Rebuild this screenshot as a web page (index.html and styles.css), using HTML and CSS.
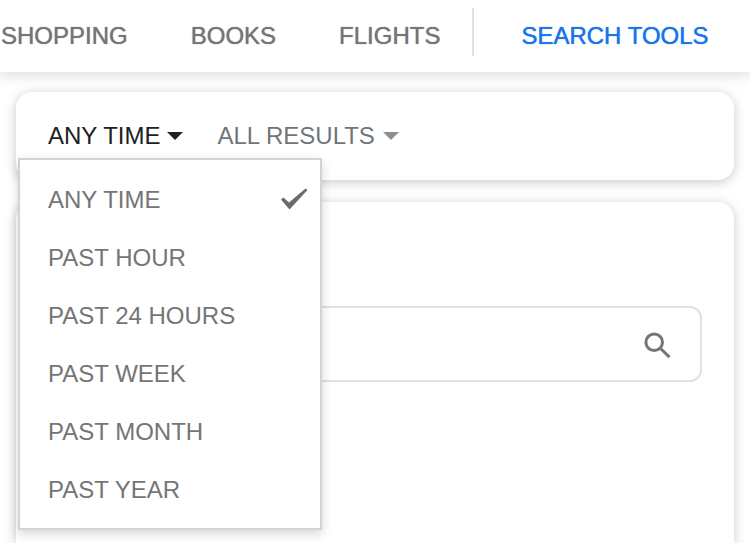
FILE: index.html
```
<!DOCTYPE html>
<html lang="en">
<head>
<meta charset="UTF-8">
<meta name="viewport" content="width=device-width, initial-scale=1.0">
<title>Search Tools</title>
<link rel="stylesheet" href="styles.css">
</head>
<body>

    <header class="header">
        <nav class="tabs">
            <a href="#shopping">SHOPPING</a>
            <a href="#books">BOOKS</a>
            <a href="#flights">FLIGHTS</a>
        </nav>
        <a href="#tools" class="tools-link">SEARCH TOOLS</a>
    </header>

    <main class="content">
        <div class="card filters">
            <div class="dropdown">
                <button type="button" class="filter active" aria-haspopup="menu" aria-expanded="true" aria-controls="timeMenu">
                    ANY TIME
                    <svg class="caret" viewBox="0 0 16 8" aria-hidden="true"><path d="M0 0h16L8 8z"/></svg>
                </button>
                <div class="menu" id="timeMenu" role="menu">
                    <button type="button" role="menuitemradio" aria-checked="true">
                        ANY TIME
                        <svg class="check" viewBox="0 0 28 24" aria-hidden="true"><path d="M1 11.500L3.500 9.500L9 14.500L25.500 0.500L27.500 2L9.500 21.500z"/></svg>
                    </button>
                    <button type="button" role="menuitemradio" aria-checked="false">PAST HOUR</button>
                    <button type="button" role="menuitemradio" aria-checked="false">PAST 24 HOURS</button>
                    <button type="button" role="menuitemradio" aria-checked="false">PAST WEEK</button>
                    <button type="button" role="menuitemradio" aria-checked="false">PAST MONTH</button>
                    <button type="button" role="menuitemradio" aria-checked="false">PAST YEAR</button>
                </div>
            </div>
            <label class="filter">
                <select class="filter-select" aria-label="Result type">
                    <option>ALL RESULTS</option>
                </select>
                <svg class="caret" viewBox="0 0 16 8" aria-hidden="true"><path d="M0 0h16L8 8z"/></svg>
            </label>
        </div>

        <div class="card results">
            <form class="search-box">
                <input type="text" aria-label="Search">
                <button type="submit" aria-label="Submit search">
                    <svg class="search-icon" viewBox="0 0 28 28" aria-hidden="true">
                        <circle cx="10.200" cy="12.300" r="8.300"/>
                        <path d="M16 18l9.500 9.200"/>
                    </svg>
                </button>
            </form>
        </div>
    </main>

</body>
</html>
```

FILE: styles.css
```
/* Basic styling */
* {
    box-sizing: border-box;
}
body {
    display: flex;
    flex-direction: column;
    height: 100vh;
    margin: 0;
    overflow: hidden;
    font-family: "Liberation Sans", Arial, sans-serif;
    font-size: 24px;
    line-height: 28px;
    color: #757575;
    background-color: #fff;
}
button, input, select {
    margin: 0;
    padding: 0;
    border: none;
    background: none;
    font: inherit;
    color: inherit;
}
button, select {
    cursor: pointer;
}
a {
    color: inherit;
    text-decoration: none;
}

/* Header */
.header {
    display: flex;
    align-items: center;
    flex-shrink: 0;
    padding: 8px 0 16px;
    white-space: nowrap;
    background-color: #fff;
    box-shadow: 0 4px 12px rgba(50, 55, 90, 0.16);
    text-shadow: 0 0 1px currentColor;
}
.tabs {
    display: flex;
    align-items: center;
    gap: 63px;
    height: 48px;
    padding: 8px 32px 0 1px;
    border-right: 2px solid #e0e0e0;
}
.tools-link {
    padding: 8px 0 0 47px;
    color: #1a73e8;
}

/* Cards */
.content {
    display: flex;
    flex: 1;
    flex-direction: column;
    gap: 22px;
    padding: 20px 16px 0;
}
.card {
    border-radius: 16px;
    background-color: #fff;
    box-shadow: 0 2px 12px rgba(0, 0, 0, 0.22);
}
.filters {
    position: relative;
    z-index: 1;
    display: flex;
    align-items: center;
    gap: 34px;
    height: 88px;
    padding: 0 32px;
}
.results {
    flex: 1;
    padding: 104px 32px 32px;
    border-radius: 16px 16px 0 0;
}

/* Filters */
.dropdown {
    position: relative;
}
.filter {
    display: flex;
    align-items: center;
    gap: 7px;
    color: #70757a;
}
.filter.active {
    color: #202124;
}
.filter-select {
    appearance: none;
}
.caret {
    width: 16px;
    height: 8px;
    fill: #8f8f8f;
}
.active .caret {
    fill: #202124;
}

.menu {
    position: absolute;
    top: 36px;
    left: -30px;
    width: 304px;
    padding: 11px 0 9px;
    border: 2px solid #d3d3d3;
    background-color: #fff;
    box-shadow: 0 4px 10px rgba(0, 0, 0, 0.16);
}
.menu button {
    display: flex;
    align-items: center;
    justify-content: space-between;
    width: 100%;
    height: 58px;
    padding: 0 12px 0 28px;
}
.check {
    width: 28px;
    height: 24px;
    fill: #6b6b6b;
}

/* Search */
.search-box {
    display: flex;
    align-items: center;
    height: 76px;
    padding: 0 28px;
    border: 2px solid #dfe1e5;
    border-radius: 12px;
}
.search-box input {
    flex: 1;
    min-width: 0;
    outline: none;
}
.search-icon {
    display: block;
    width: 28px;
    height: 28px;
    fill: none;
    stroke: #757575;
    stroke-width: 3;
}
```
